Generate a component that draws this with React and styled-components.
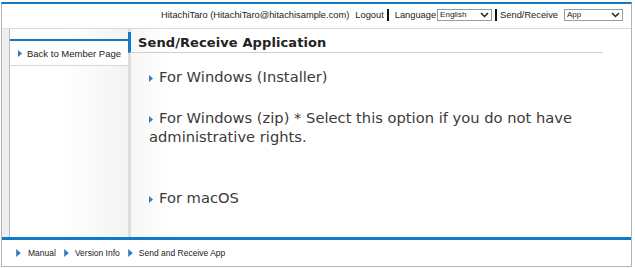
import styled, { createGlobalStyle } from 'styled-components';

const Global = createGlobalStyle`
  html, body {
    margin: 0;
    padding: 0;
    background: #fff;
  }
`;

const Frame = styled.div`
  box-sizing: border-box;
  margin: 2px 0 0 1px;
  width: 631px;
  height: 265px;
  border-top: 2px solid #1479c4;
  border-left: 1px solid #b3b3b3;
  border-right: 1px solid #b3b3b3;
  border-bottom: 1px solid #b3b3b3;
  display: flex;
  flex-direction: column;
  font-family: "Liberation Sans", Arial, sans-serif;
`;

const Header = styled.div`
  height: 22px;
  border-bottom: 1px solid #dcdcdc;
  display: flex;
  align-items: center;
  justify-content: flex-end;
  padding: 0 8px 2px 0;
  font-size: 9.3px;
  color: #222;
`;

const HeaderText = styled.span`
  margin-left: ${(p) => p.$gap || 0}px;
  white-space: nowrap;
`;

const Bar = styled.span`
  display: inline-block;
  width: 2px;
  height: 12px;
  background: #111;
  margin: 0 3px 0 3px;
`;

const SelectWrap = styled.span`
  position: relative;
  display: inline-flex;
  margin-left: ${(p) => p.$gap || 1}px;
`;

const Select = styled.select`
  appearance: none;
  box-sizing: border-box;
  width: ${(p) => p.$w}px;
  height: 12px;
  border: 1px solid #9a9a9a;
  border-radius: 0;
  background: #fff;
  font-family: "Liberation Sans", Arial, sans-serif;
  font-size: 8px;
  color: #222;
  padding: 0 0 0 2px;
  line-height: 10px;
`;

const Chevron = styled.svg`
  position: absolute;
  right: 3px;
  top: 3px;
  pointer-events: none;
`;

const Body = styled.div`
  flex: 1;
  display: flex;
  min-height: 0;
`;

const Strip = styled.div`
  width: 7px;
  background: #efefef;
  border-right: 1px solid #bdbdbd;
`;

const Sidebar = styled.div`
  width: 118px;
  padding-top: 10px;
  background: linear-gradient(to right, #fff 0%, #fff 45%, #f3f3f3 100%);
`;

const SideMenu = styled.ul`
  list-style: none;
  margin: 0;
  padding: 0;
  border-top: 2px solid #1479c4;
`;

const SideItem = styled.li`
  height: 24px;
  display: flex;
  align-items: center;
  padding-left: 8px;
  border-bottom: 1px solid #d6d6d6;
  background: #fff;
  font-size: 9.5px;
  color: #222;
`;

const Content = styled.div`
  flex: 1;
  border-left: 3px solid #dddddd;
  background: linear-gradient(to right, #f7f7f7 0px, #fff 40px);
  padding-right: 28px;
`;

const Title = styled.h1`
  margin: 3px 0 0 -3px;
  height: 21px;
  box-sizing: border-box;
  border-left: 3px solid #1479c4;
  border-bottom: 1px solid #cfcfcf;
  padding-left: 7px;
  display: flex;
  align-items: center;
  font-family: "DejaVu Sans", Verdana, sans-serif;
  font-weight: bold;
  font-size: 13px;
  color: #222;
  letter-spacing: 0.1px;
`;

const Items = styled.div`
  padding: 14px 0 0 18px;
`;

const Item = styled.p`
  margin: 0 0 ${(p) => p.$after}px 0;
  font-family: "DejaVu Sans", Verdana, sans-serif;
  font-size: 14.7px;
  line-height: 19px;
  color: #3a3a3a;
`;

const Footer = styled.div`
  border-top: 3px solid #0b7dc8;
  flex: 0 0 26px;
  display: flex;
  align-items: center;
  padding-left: 14px;
  font-size: 8.5px;
  color: #222;
`;

const FootLink = styled.span`
  display: inline-flex;
  align-items: center;
  margin-right: 8px;
`;

const Tri = ({ w = 4, h = 7, gap = 5 }) => (
  <svg width={w} height={h} viewBox="0 0 4 7" style={{ marginRight: gap, flex: 'none', verticalAlign: 'middle' }}>
    <path d="M0 0 L4 3.5 L0 7 Z" fill="#2f7dc4" />
  </svg>
);

const Down = () => (
  <Chevron width="9" height="6" viewBox="0 0 9 6">
    <path d="M1 1 L4.5 4.5 L8 1" fill="none" stroke="#222" strokeWidth="1.5" />
  </Chevron>
);

export default function App() {
  return (
    <>
      <Global />
      <Frame>
        <Header>
          <HeaderText>HitachiTaro (HitachiTaro@hitachisample.com)</HeaderText>
          <HeaderText $gap={6}>Logout</HeaderText>
          <Bar />
          <HeaderText $gap={3}>Language</HeaderText>
          <SelectWrap $gap={1}>
            <Select $w={55} defaultValue="en">
              <option value="en">English</option>
            </Select>
            <Down />
          </SelectWrap>
          <Bar />
          <HeaderText>Send/Receive</HeaderText>
          <SelectWrap $gap={6}>
            <Select $w={59} defaultValue="app">
              <option value="app">App</option>
            </Select>
            <Down />
          </SelectWrap>
        </Header>
        <Body>
          <Strip />
          <Sidebar>
            <SideMenu>
              <SideItem>
                <Tri gap={5} />
                Back to Member Page
              </SideItem>
            </SideMenu>
          </Sidebar>
          <Content>
            <Title>Send/Receive Application</Title>
            <Items>
              <Item $after={22}>
                <Tri gap={6} />
                For Windows (Installer)
              </Item>
              <Item $after={42}>
                <Tri gap={6} />
                For Windows (zip) * Select this option if you do not have administrative rights.
              </Item>
              <Item $after={0}>
                <Tri gap={6} />
                For macOS
              </Item>
            </Items>
          </Content>
        </Body>
        <Footer>
          <FootLink>
            <Tri w={5} h={8} gap={7} />
            Manual
          </FootLink>
          <FootLink>
            <Tri w={5} h={8} gap={6} />
            Version Info
          </FootLink>
          <FootLink>
            <Tri w={5} h={8} gap={6} />
            Send and Receive App
          </FootLink>
        </Footer>
      </Frame>
    </>
  );
}
